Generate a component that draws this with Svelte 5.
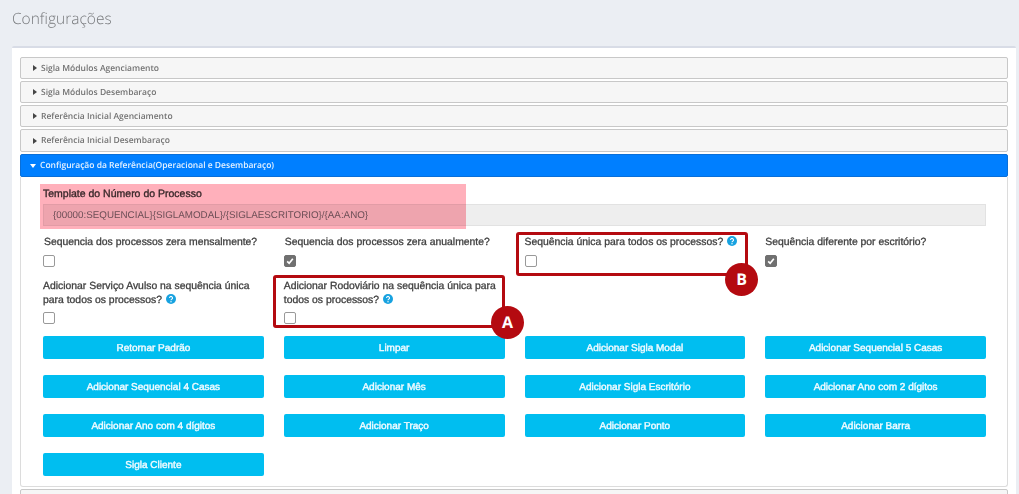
<script lang="ts">
	const collapsedTop = [
		'Sigla Módulos Agenciamento',
		'Sigla Módulos Desembaraço',
		'Referência Inicial Agenciamento',
		'Referência Inicial Desembaraço'
	];

	const options = [
		{ label: 'Sequencia dos processos zera mensalmente?', checked: false, help: false },
		{ label: 'Sequencia dos processos zera anualmente?', checked: true, help: false },
		{ label: 'Sequência única para todos os processos?', checked: false, help: true },
		{ label: 'Sequência diferente por escritório?', checked: true, help: false },
		{ label: 'Adicionar Serviço Avulso na sequência única para todos os processos?', checked: false, help: true },
		{ label: 'Adicionar Rodoviário na sequência única para todos os processos?', checked: false, help: true }
	];

	const actions = [
		'Retornar Padrão',
		'Limpar',
		'Adicionar Sigla Modal',
		'Adicionar Sequencial 5 Casas',
		'Adicionar Sequencial 4 Casas',
		'Adicionar Mês',
		'Adicionar Sigla Escritório',
		'Adicionar Ano com 2 dígitos',
		'Adicionar Ano com 4 dígitos',
		'Adicionar Traço',
		'Adicionar Ponto',
		'Adicionar Barra',
		'Sigla Cliente'
	];
</script>

<div class="page">
	<h1>Configurações</h1>

	<section class="card">
		{#each collapsedTop as title}
			<div class="acc-header"><span class="caret-right"></span>{title}</div>
		{/each}

		<div class="acc-header active"><span class="caret-down"></span>Configuração da Referência(Operacional e Desembaraço)</div>

		<div class="acc-body">
			<label class="field-label" for="template">Template do Número do Processo</label>
			<input id="template" class="template" readonly value={'{00000:SEQUENCIAL}{SIGLAMODAL}/{SIGLAESCRITORIO}/{AA:ANO}'} />

			<div class="options">
				{#each options as opt}
					<div class="option">
						<div class="option-label">
							{opt.label}
							{#if opt.help}
								<svg class="help" viewBox="0 0 16 16" aria-hidden="true">
									<circle cx="8" cy="8" r="8" fill="#17a2e0" />
									<path d="M5.6 6.2a2.4 2.3 0 1 1 3.6 2c-.8.5-1.2.8-1.2 1.6" fill="none" stroke="#fff" stroke-width="1.8" />
									<circle cx="8" cy="12.4" r="1.1" fill="#fff" />
								</svg>
							{/if}
						</div>
						<span class="check" class:checked={opt.checked}>
							{#if opt.checked}
								<svg viewBox="0 0 12 12" aria-hidden="true">
									<path d="M2.6 6.4l2.4 2.4 4.4-5.4" fill="none" stroke="#fff" stroke-width="2" />
								</svg>
							{/if}
						</span>
					</div>
				{/each}
			</div>

			<div class="actions">
				{#each actions as action}
					<button type="button">{action}</button>
				{/each}
			</div>
		</div>

		<div class="acc-header last"></div>
	</section>

	<!-- marcações do tutorial por cima da tela -->
	<div class="mark-pink"></div>
	<div class="mark-box box-a"></div>
	<div class="mark-box box-b"></div>
	<div class="mark-dot dot-a">A</div>
	<div class="mark-dot dot-b">B</div>
</div>

<style>
	:global(body) {
		margin: 0;
		background: #ebeef3;
	}

	.page {
		position: relative;
		width: 1019px;
		height: 494px;
		overflow: hidden;
		background: #ebeef3;
		box-sizing: border-box;
		padding: 0 3px 0 12px;
		font-family: 'Liberation Sans', Arial, sans-serif;
		text-rendering: geometricPrecision;
	}

	h1 {
		margin: 0;
		padding-top: 8px;
		height: 46px;
		box-sizing: border-box;
		font-family: 'Open Sans', sans-serif;
		font-size: 15.5px;
		line-height: 21px;
		font-weight: 300;
		color: #77797c;
	}

	.card {
		background: #fff;
		border-top: 2px solid #d8dce6;
		border-radius: 2px 2px 0 0;
		padding: 9px 8px 0;
		height: 448px;
		box-sizing: border-box;
	}

	.acc-header {
		height: 22px;
		margin-bottom: 2px;
		box-sizing: border-box;
		display: flex;
		align-items: center;
		padding-left: 12px;
		background: #f6f6f6;
		border: 1px solid #c8c8c8;
		border-radius: 2px;
		font-family: 'Open Sans', sans-serif;
		font-size: 8.5px;
		font-weight: 600;
		color: #727272;
	}

	.acc-header:nth-child(4) {
		height: 23px;
	}

	.acc-header.active {
		height: 23px;
		margin-bottom: 0;
		background: #007fff;
		border-color: #0a6fd8;
		color: #e6f2ff;
	}

	.acc-header.last {
		margin-top: 2px;
	}

	.caret-right {
		width: 0;
		height: 0;
		margin-right: 4px;
		border-left: 4px solid #454545;
		border-top: 3.5px solid transparent;
		border-bottom: 3.5px solid transparent;
	}

	.caret-down {
		width: 0;
		height: 0;
		margin: 0 4px 0 -3px;
		border-top: 4px solid #fff;
		border-left: 3.5px solid transparent;
		border-right: 3.5px solid transparent;
	}

	.acc-body {
		height: 310px;
		box-sizing: border-box;
		border: 1px solid #dcdcdc;
		border-top: 0;
		border-radius: 0 0 3px 3px;
		padding: 10px 21px 0 22px;
	}

	.field-label {
		display: block;
		margin: 0 0 3px 0;
		font-size: 10.5px;
		line-height: 14px;
		font-weight: 400;
		color: #3a3a3a;
		-webkit-text-stroke: 0.35px #3a3a3a;
	}

	.template {
		display: block;
		width: 100%;
		height: 22px;
		box-sizing: border-box;
		padding: 0 8px 0 9px;
		background: #eeeeee;
		border: 1px solid #e2e2e2;
		font-family: 'Liberation Sans', Arial, sans-serif;
		font-size: 9.8px;
		color: #6e7276;
		outline: none;
		text-rendering: geometricPrecision;
	}

	.options {
		display: grid;
		grid-template-columns: repeat(4, 1fr);
		grid-template-rows: 44px 57px;
		column-gap: 20px;
		margin-top: 9px;
		font-size: 10.4px;
	}

	.option-label {
		padding-top: 1px;
		line-height: 14px;
		font-weight: 400;
		color: #3f3f3f;
		-webkit-text-stroke: 0.3px #3f3f3f;
		margin-bottom: 5px;
	}

	.option:nth-child(-n + 2) .option-label {
		padding-left: 1px;
	}

	.option:nth-child(n + 5) .option-label {
		margin-bottom: 4px;
	}

	.help {
		width: 10px;
		height: 10px;
		vertical-align: -1px;
		margin-left: 1px;
	}

	.check {
		display: block;
		width: 10px;
		height: 10px;
		border: 1px solid #999;
		border-radius: 2px;
		background: #fff;
	}

	.check.checked {
		background: #707070;
		border-color: #707070;
	}

	.check svg {
		display: block;
		width: 10px;
		height: 10px;
	}

	.actions {
		display: grid;
		grid-template-columns: repeat(4, 1fr);
		column-gap: 20px;
		row-gap: 16px;
	}

	button {
		height: 23px;
		padding: 1px 0 0;
		background: #00bef0;
		border: 0;
		border-radius: 2px;
		color: #f2fbff;
		font-family: 'Liberation Sans', Arial, sans-serif;
		font-size: 10px;
		font-weight: 400;
		-webkit-text-stroke: 0.4px #f2fbff;
		text-rendering: geometricPrecision;
	}

	.mark-pink {
		position: absolute;
		left: 40px;
		top: 184px;
		width: 426px;
		height: 45px;
		background: #ffb0bb;
		mix-blend-mode: multiply;
	}

	.mark-box {
		position: absolute;
		box-sizing: border-box;
		border: 3px solid #b40a10;
		border-radius: 3px;
	}

	.box-a {
		left: 273px;
		top: 275px;
		width: 232px;
		height: 53px;
	}

	.box-b {
		left: 516px;
		top: 232px;
		width: 232px;
		height: 44px;
	}

	.mark-dot {
		position: absolute;
		width: 33px;
		height: 33px;
		border-radius: 50%;
		background: #b40a10;
		color: #fff;
		font-family: 'Open Sans', sans-serif;
		font-weight: 700;
		font-size: 16px;
		line-height: 33px;
		text-align: center;
	}

	.dot-a {
		left: 491px;
		top: 306px;
	}

	.dot-b {
		left: 725px;
		top: 263px;
	}
</style>
